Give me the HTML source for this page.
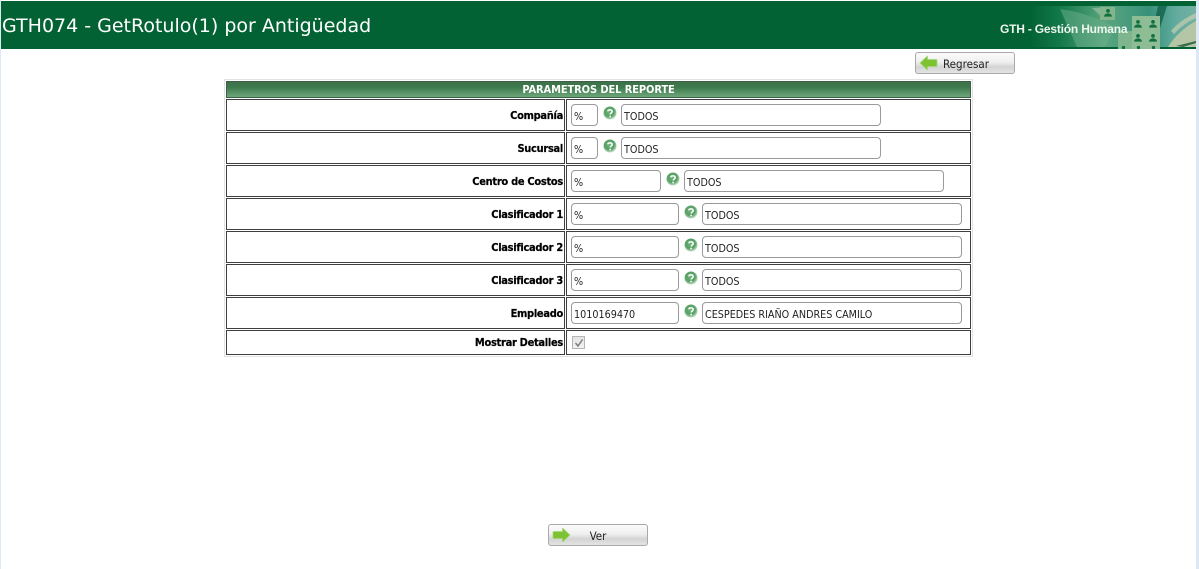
<!DOCTYPE html>
<html lang="es"><head><meta charset="utf-8"><title>GTH074</title>
<style>
html,body{margin:0;padding:0;background:#fff}
body{position:relative;width:1199px;height:569px;overflow:hidden;font-family:"DejaVu Sans","Liberation Sans",sans-serif;color:#000}
.a{position:absolute;box-sizing:border-box;white-space:nowrap}
.cell{border:1px solid #3f3f3f;background:#fff}
.lab{font:bold 11px/14px "DejaVu Sans Condensed","Liberation Sans",sans-serif;letter-spacing:-.3px;-webkit-text-stroke:.2px #000;text-align:right;left:300px;width:263px;color:#000}
.in{border:1px solid #9a9a9a;border-radius:4px;height:22px;background:#fff;font:10.7px/22px "DejaVu Sans Condensed","Liberation Sans",sans-serif;padding-left:2px;color:#222}
.in span{position:relative;top:1px}
.btn{width:100px;height:22px;border:1px solid #a9a9a9;border-radius:3px;background:linear-gradient(#fbfbfb 0%,#efefef 45%,#d4d4d4 70%,#e4e4e4 100%);font:11.5px/21px "DejaVu Sans Condensed","Liberation Sans",sans-serif;color:#222}
svg{position:absolute;display:block}
</style></head><body>
<div class="a" style="left:1196px;top:0;width:3px;height:569px;background:#dce9f5"></div>
<div class="a" style="left:0;top:0;width:1px;height:569px;background:#dce9f5"></div>
<div class="a" style="left:1px;top:1px;width:1195px;height:48px;background:#036233"></div>
<svg style="left:1030px;top:1px" width="166" height="48" viewBox="0 0 166 48">
<defs><linearGradient id="g" x1="0" x2="1" y1="0" y2="0"><stop offset="0" stop-color="#036233"/><stop offset=".18" stop-color="#12784a"/><stop offset=".45" stop-color="#5aa57e"/><stop offset=".72" stop-color="#37917a"/><stop offset=".88" stop-color="#62ab9e"/><stop offset="1" stop-color="#74b0a2"/></linearGradient>
<symbol id="p" viewBox="0 0 14 14"><circle cx="7" cy="4" r="2.600" fill="#126f42"/><path d="M1.500 12c0-3 3-4.500 5.500-4.500s5.500 1.500 5.500 4.500z" fill="#126f42"/></symbol></defs>
<rect y="5" width="166" height="41" fill="url(#g)"/>
<path d="M30 8q25 3 55 18l-10 20h-28z" fill="#6bb08c" opacity=".5"/>
<path d="M62 7h20l-6 13z" fill="#a3c7ac" opacity=".6"/>
<path d="M128 5h9l-7 22h-7z" fill="#13604a" opacity=".8"/>
<path d="M166 20q-18 10-28 26h28z" fill="#b4c6a6"/>
<path d="M166 12q-16 7-25 18l3 3q10-11 22-16z" fill="#c6cfb0" opacity=".7"/>
<path d="M146 45l20-5v2l-13 4z" fill="#3b6b4c"/>
<rect x="70" y="6" width="15" height="13" fill="#83b48c"/><use href="#p" x="73" y="7" width="10" height="10"/>
<rect x="102" y="15" width="28" height="33" fill="#8dbc95"/><rect x="88" y="30" width="14" height="18" fill="#7fb58d"/>
<use href="#p" x="103" y="18" width="10" height="10"/><use href="#p" x="118" y="18" width="10" height="10"/>
<use href="#p" x="103" y="32" width="10" height="10"/><use href="#p" x="118" y="32" width="10" height="10"/>
<use href="#p" x="89" y="44" width="9" height="9"/><use href="#p" x="104" y="44" width="9" height="9"/><use href="#p" x="119" y="44" width="9" height="9"/>
</svg>
<div class="a" style="left:2px;top:14px;font:19px/24px 'DejaVu Sans',sans-serif;color:#fff">GTH074 - GetRotulo(1) por Antigüedad</div>
<div class="a" style="left:1000px;top:21px;font:bold 12px/16px 'Liberation Sans',sans-serif;letter-spacing:-.2px;color:#eef5ee">GTH - Gestión Humana</div>

<div class="a btn" style="left:915px;top:52px;padding-left:27px;line-height:22px">
<svg style="left:3px;top:2px" width="19" height="16" viewBox="0 0 19 16"><path d="M1 8 8.500 1v3.500H17q1 0 1 1v5q0 1-1 1H8.500V15z" fill="#7cc233" stroke="#a6d877" stroke-width=".8" stroke-linejoin="round"/></svg>Regresar</div>

<div class="a" style="left:224px;top:79px;width:749px;height:278px;border:1px solid #e2e2e2"></div>
<div class="a" style="left:226px;top:81px;width:745px;height:17px;border:1px solid #3d5f47;background:linear-gradient(#3f7149 0%,#3d7a4c 35%,#6da67a 100%);color:#fff;font:bold 11px/16px 'DejaVu Sans Condensed','Liberation Sans',sans-serif;letter-spacing:-.1px;text-align:center">PARAMETROS DEL REPORTE</div>

<div class="a cell" style="left:226px;top:99px;width:339px;height:32px"></div><div class="a cell" style="left:566px;top:99px;width:405px;height:32px"></div>
<div class="a cell" style="left:226px;top:132px;width:339px;height:32px"></div><div class="a cell" style="left:566px;top:132px;width:405px;height:32px"></div>
<div class="a cell" style="left:226px;top:165px;width:339px;height:32px"></div><div class="a cell" style="left:566px;top:165px;width:405px;height:32px"></div>
<div class="a cell" style="left:226px;top:198px;width:339px;height:32px"></div><div class="a cell" style="left:566px;top:198px;width:405px;height:32px"></div>
<div class="a cell" style="left:226px;top:231px;width:339px;height:32px"></div><div class="a cell" style="left:566px;top:231px;width:405px;height:32px"></div>
<div class="a cell" style="left:226px;top:264px;width:339px;height:32px"></div><div class="a cell" style="left:566px;top:264px;width:405px;height:32px"></div>
<div class="a cell" style="left:226px;top:297px;width:339px;height:32px"></div><div class="a cell" style="left:566px;top:297px;width:405px;height:32px"></div>
<div class="a cell" style="left:226px;top:330px;width:339px;height:25px"></div><div class="a cell" style="left:566px;top:330px;width:405px;height:25px"></div>

<div class="a lab" style="top:109px">Compañía</div>
<div class="a lab" style="top:142px">Sucursal</div>
<div class="a lab" style="top:175px">Centro de Costos</div>
<div class="a lab" style="top:208px">Clasificador 1</div>
<div class="a lab" style="top:241px">Clasificador 2</div>
<div class="a lab" style="top:274px">Clasificador 3</div>
<div class="a lab" style="top:307px">Empleado</div>
<div class="a lab" style="top:336px">Mostrar Detalles</div>

<svg width="0" height="0" style="left:0;top:0"><defs><radialGradient id="h" cx=".45" cy=".4" r=".6"><stop offset="0" stop-color="#6fb57a"/><stop offset=".62" stop-color="#569f64"/><stop offset="1" stop-color="#c5e0c8"/></radialGradient>
<symbol id="q" viewBox="0 0 14 14"><circle cx="7" cy="7" r="6.500" fill="url(#h)"/><path d="M4.800 5.300C5 3.500 9 3.300 9.200 5.500 9.300 7 7.300 7 7.200 8.500" fill="none" stroke="#fff" stroke-width="1.500"/><circle cx="7.100" cy="10.500" r=".9" fill="#fff"/></symbol></defs></svg>

<div class="a in" style="left:571px;top:104px;width:27px"><span>%</span></div>
<svg style="left:603px;top:106px" width="14" height="14"><use href="#q"/></svg>
<div class="a in" style="left:621px;top:104px;width:260px"><span>TODOS</span></div>

<div class="a in" style="left:571px;top:137px;width:27px"><span>%</span></div>
<svg style="left:603px;top:139px" width="14" height="14"><use href="#q"/></svg>
<div class="a in" style="left:621px;top:137px;width:260px"><span>TODOS</span></div>

<div class="a in" style="left:571px;top:170px;width:90px"><span>%</span></div>
<svg style="left:666px;top:172px" width="14" height="14"><use href="#q"/></svg>
<div class="a in" style="left:684px;top:170px;width:260px"><span>TODOS</span></div>

<div class="a in" style="left:571px;top:203px;width:108px"><span>%</span></div>
<svg style="left:684px;top:205px" width="14" height="14"><use href="#q"/></svg>
<div class="a in" style="left:702px;top:203px;width:260px"><span>TODOS</span></div>

<div class="a in" style="left:571px;top:236px;width:108px"><span>%</span></div>
<svg style="left:684px;top:238px" width="14" height="14"><use href="#q"/></svg>
<div class="a in" style="left:702px;top:236px;width:260px"><span>TODOS</span></div>

<div class="a in" style="left:571px;top:269px;width:108px"><span>%</span></div>
<svg style="left:684px;top:271px" width="14" height="14"><use href="#q"/></svg>
<div class="a in" style="left:702px;top:269px;width:260px"><span>TODOS</span></div>

<div class="a in" style="left:571px;top:302px;width:108px"><span>1010169470</span></div>
<svg style="left:684px;top:304px" width="14" height="14"><use href="#q"/></svg>
<div class="a in" style="left:702px;top:302px;width:260px"><span>CESPEDES RIAÑO ANDRES CAMILO</span></div>

<div class="a" style="left:572px;top:336px;width:13px;height:13px;border:1px solid #b5b5b5;background:linear-gradient(#e4e4e4,#f2f2f2)">
<svg style="left:1px;top:1px" width="10" height="10" viewBox="0 0 10 10"><path d="M1.500 5 4 8 8.500 1.500" fill="none" stroke="#7d7d7d" stroke-width="1.500"/></svg></div>

<div class="a btn" style="left:548px;top:524px;text-align:center;padding-left:0;line-height:22px">
<svg style="left:3px;top:2px" width="19" height="16" viewBox="0 0 19 16"><path d="M18 8 10.500 1v3.500H2q-1 0-1 1v5q0 1 1 1h8.500V15z" fill="#7cc233" stroke="#a6d877" stroke-width=".8" stroke-linejoin="round"/></svg>Ver</div>
</body></html>
